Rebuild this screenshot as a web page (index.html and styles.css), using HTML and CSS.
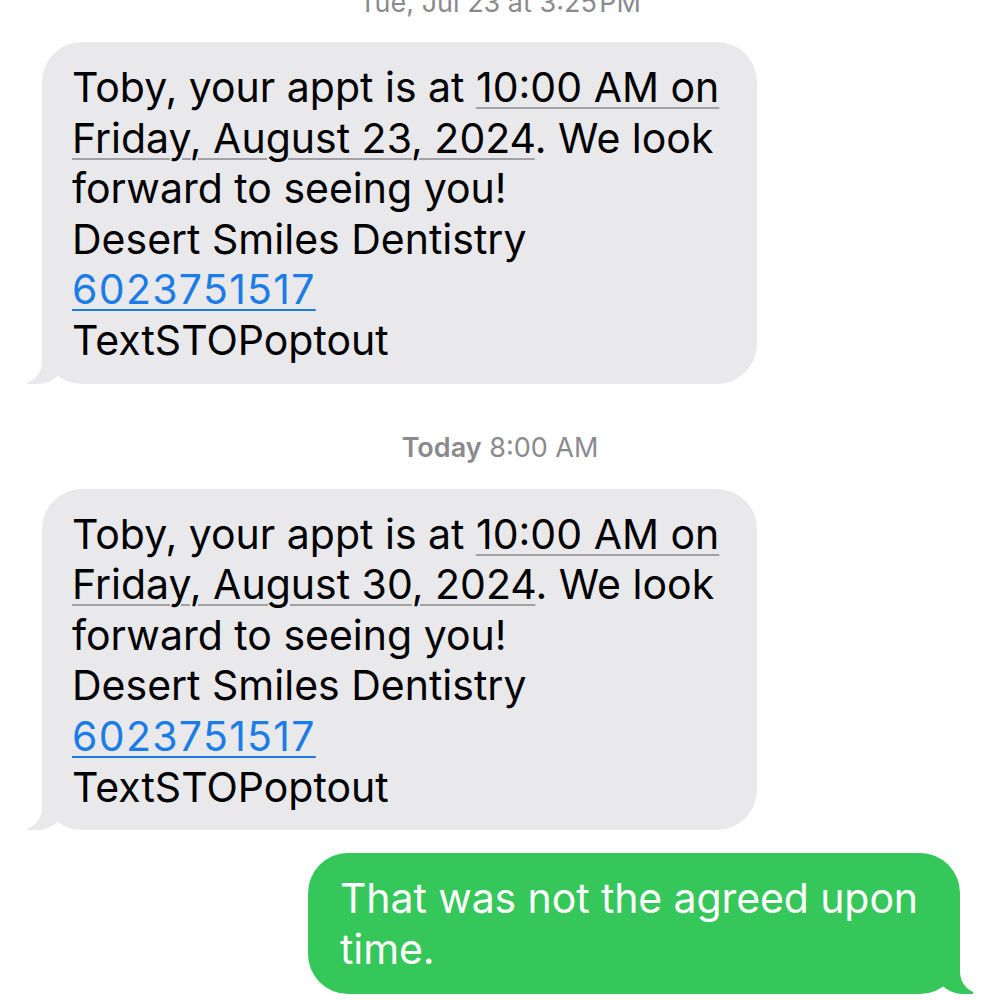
FILE: index.html
```html
<!DOCTYPE html>
<html>
<head>
<meta charset="utf-8">
<link rel="stylesheet" href="styles.css">
</head>
<body>
<div class="thread">
  <div class="stamp stamp-top">Tue, Jul 23 at 3:25&#8202;PM</div>
  <div class="row in">
    <div class="bubble gray">Toby, your appt is at <span class="dd">10:00 AM on</span><br><span class="dd">Friday, August 23, 2024</span>. We look<br>forward to seeing you!<br>Desert Smiles Dentistry<br><span class="link">6023751517</span><br>TextSTOPoptout</div>
  </div>
  <div class="stamp"><b>Today</b> 8:00 AM</div>
  <div class="row in">
    <div class="bubble gray">Toby, your appt is at <span class="dd">10:00 AM on</span><br><span class="dd">Friday, August 30, 2024</span>. We look<br>forward to seeing you!<br>Desert Smiles Dentistry<br><span class="link">6023751517</span><br>TextSTOPoptout</div>
  </div>
  <div class="row out">
    <div class="bubble green">That was not the agreed upon<br>time.</div>
  </div>
</div>
</body>
</html>
```
FILE: styles.css
```css
html, body {
  margin: 0;
  padding: 0;
  background: #ffffff;
}
body {
  font-family: Inter, "Noto Sans", "Liberation Sans", sans-serif;
  overflow: hidden;
  height: 1000px;
}
.thread {
  display: flex;
  flex-direction: column;
}
.stamp {
  color: #8a8a8e;
  font-size: 27px;
  text-align: center;
  line-height: 34px;
  height: 34px;
  margin: 47px 0 24px;
}
.stamp b {
  font-weight: 600;
}
.stamp-top {
  margin: -14px 0 22px;
}
.row {
  display: flex;
}
.row.in {
  padding-left: 42px;
}
.row.out {
  justify-content: flex-end;
  padding-right: 40px;
  margin-top: 23px;
}
.bubble {
  position: relative;
  font-size: 41px;
  line-height: 50.6px;
  letter-spacing: 0;
  border-radius: 40px;
  white-space: nowrap;
}
.gray {
  background: #e9e9eb;
  color: #000;
  width: 685px;
  padding: 20px 0 18px 30px;
}
.green {
  background: #35c759;
  color: #fff;
  width: 620px;
  padding: 20px 0 20px 32px;
  letter-spacing: -0.1px;
}
.dd {
  text-decoration: underline;
  text-decoration-color: #a2a2a6;
  text-decoration-thickness: 2px;
  text-underline-offset: 5px;
}
.link {
  color: #1a7ce6;
  letter-spacing: 1.3px;
  text-decoration: underline;
  text-decoration-thickness: 2px;
  text-underline-offset: 5px;
}
.gray::before {
  content: "";
  position: absolute;
  bottom: 0;
  left: -15px;
  width: 40px;
  height: 46px;
  background: #e9e9eb;
  border-bottom-right-radius: 30px;
}
.gray::after {
  content: "";
  position: absolute;
  bottom: 0;
  left: -40px;
  width: 40px;
  height: 46px;
  background: #ffffff;
  border-bottom-right-radius: 22px;
}
.green::before {
  content: "";
  position: absolute;
  bottom: 0;
  right: -13px;
  width: 40px;
  height: 46px;
  background: #35c759;
  border-bottom-left-radius: 30px;
}
.green::after {
  content: "";
  position: absolute;
  bottom: 0;
  right: -40px;
  width: 40px;
  height: 46px;
  background: #ffffff;
  border-bottom-left-radius: 22px;
}
```
